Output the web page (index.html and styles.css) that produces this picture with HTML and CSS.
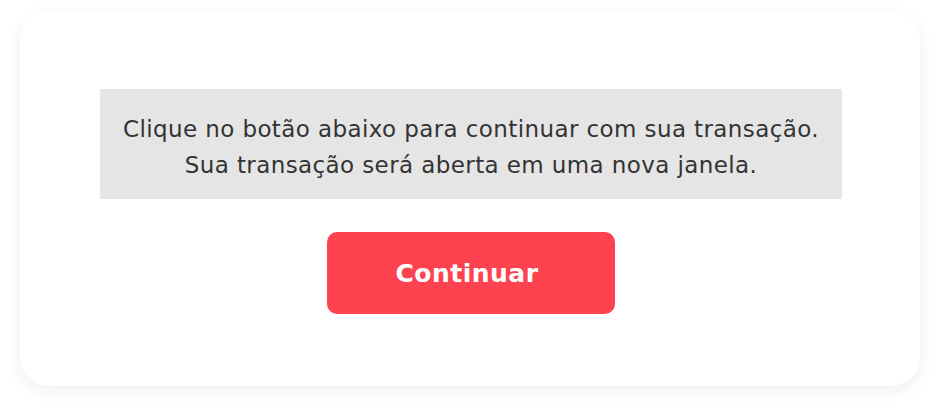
FILE: index.html
```html
<!DOCTYPE html>
<html lang="pt">
<head>
<meta charset="utf-8">
<link rel="stylesheet" href="styles.css">
</head>
<body>
<div class="card">
  <div class="notice">
    <p>Clique no botão abaixo para continuar com sua transação.<br>Sua transação será aberta em uma nova janela.</p>
  </div>
  <button class="btn" type="button">Continuar</button>
</div>
</body>
</html>
```
FILE: styles.css
```css
html, body { margin: 0; padding: 0; background: #ffffff; }
body {
  width: 940px;
  height: 414px;
  padding: 12px 20px 0;
  box-sizing: border-box;
  font-family: "DejaVu Sans", sans-serif;
}
.card {
  width: 900px;
  height: 374px;
  background: #fff;
  border-radius: 28px;
  box-shadow: 0 4px 16px rgba(0,0,0,0.07);
  box-sizing: border-box;
  padding-top: 77px;
  display: flex;
  flex-direction: column;
  align-items: center;
}
.notice {
  width: 742px;
  height: 110px;
  margin-left: 2px;
  padding-top: 6px;
  box-sizing: border-box;
  background: #e5e5e5;
  display: flex;
  align-items: center;
  justify-content: center;
}
.notice p {
  margin: 0;
  text-align: center;
  font-size: 23px;
  line-height: 36px;
  letter-spacing: 0.4px;
  color: #333;
}
.btn {
  margin-top: 33px;
  margin-left: 2px;
  width: 288px;
  height: 82px;
  padding: 0 8px 0 0;
  border: none;
  border-radius: 10px;
  background: #ff424f;
  color: #fff;
  font-family: "DejaVu Sans", sans-serif;
  font-weight: 700;
  font-size: 25px;
  letter-spacing: 0.5px;
}
```
